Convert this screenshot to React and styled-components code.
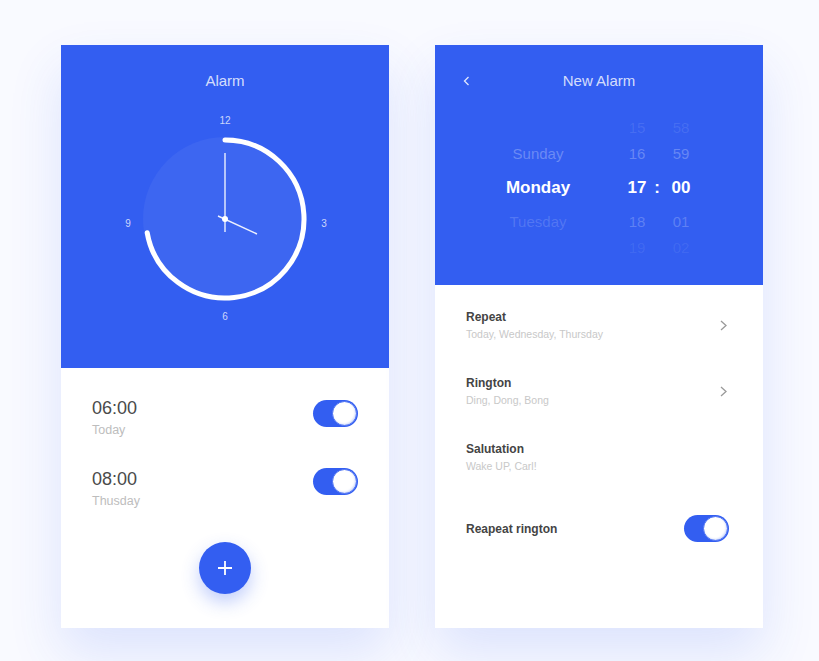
import React from 'react';
import styled, { createGlobalStyle } from 'styled-components';

const BLUE = '#335ef1';

const GlobalStyle = createGlobalStyle`
  html, body {
    margin: 0;
    padding: 0;
    background: #f9faff;
    font-family: "Liberation Sans", Arial, sans-serif;
  }
`;

const Page = styled.div`
  display: flex;
  gap: 46px;
  padding: 45px 0 0 61px;
  height: 661px;
  box-sizing: border-box;
`;

const Card = styled.div`
  width: 328px;
  height: 583px;
  background: #fff;
  display: flex;
  flex-direction: column;
  box-shadow: 0 25px 50px rgba(51, 94, 241, 0.14);
`;

const Header = styled.div`
  height: ${(p) => p.h}px;
  background: ${BLUE};
  display: flex;
  flex-direction: column;
  align-items: center;
  padding-top: 26px;
  box-sizing: border-box;
`;

const TitleBar = styled.div`
  width: 100%;
  height: 20px;
  display: flex;
  align-items: center;
  justify-content: center;
  position: relative;
`;

const Title = styled.div`
  font-size: 15px;
  line-height: 20px;
  color: rgba(255, 255, 255, 0.8);
`;

const Back = styled.svg`
  position: absolute;
  left: 28px;
  top: 5px;
`;

const ClockFace = styled.svg`
  margin-top: 18px;
  display: block;
`;

const Body = styled.div`
  flex: 1;
  display: flex;
  flex-direction: column;
  padding: ${(p) => p.pad};
`;

const AlarmRow = styled.div`
  display: flex;
  justify-content: space-between;
  align-items: flex-start;
  margin-bottom: ${(p) => p.mb || 0}px;
`;

const TimeText = styled.div`
  font-size: 18px;
  line-height: 22px;
  color: #4a4a4a;
`;

const DayText = styled.div`
  font-size: 12.5px;
  line-height: 16px;
  margin-top: 3px;
  color: #bdbdbd;
`;

const Toggle = styled.div`
  width: 45px;
  height: 27px;
  border-radius: 14px;
  background: ${BLUE};
  display: flex;
  justify-content: flex-end;
  align-items: center;
  padding: 0 1px;
  box-sizing: border-box;
  margin-top: ${(p) => p.mt || 0}px;
  flex-shrink: 0;
`;

const Knob = styled.div`
  width: 25px;
  height: 25px;
  border-radius: 50%;
  background: #fff;
  box-sizing: border-box;
  border: 1px solid #4a70f3;
  box-shadow: inset -1px -1px 2px rgba(51, 94, 241, 0.25);
`;

const Fab = styled.div`
  align-self: center;
  width: 52px;
  height: 52px;
  border-radius: 50%;
  background: ${BLUE};
  margin-top: 33px;
  display: flex;
  align-items: center;
  justify-content: center;
  box-shadow: 0 8px 18px rgba(51, 94, 241, 0.3);
`;

const Picker = styled.div`
  display: flex;
  margin-top: 24px;
  align-self: flex-start;
  margin-left: 53px;
`;

const PickCol = styled.div`
  width: ${(p) => p.w}px;
  margin-right: ${(p) => p.mr || 0}px;
  display: flex;
  flex-direction: column;
  align-items: center;
`;

const PickItem = styled.div`
  height: ${(p) => (p.sel ? 42 : 26)}px;
  line-height: ${(p) => (p.sel ? 42 : 26)}px;
  font-size: ${(p) => (p.sel ? 17 : 15)}px;
  font-weight: ${(p) => (p.sel ? 700 : 400)};
  color: rgba(255, 255, 255, ${(p) => p.a});
  white-space: nowrap;
`;

const SettingRow = styled.div`
  display: flex;
  align-items: center;
  justify-content: space-between;
  margin-bottom: ${(p) => p.mb || 0}px;
`;

const SettingTitle = styled.div`
  font-size: 12px;
  line-height: 16px;
  font-weight: 700;
  color: #444;
`;

const SettingSub = styled.div`
  font-size: 10.5px;
  line-height: 14px;
  margin-top: 2px;
  color: #c8c8c8;
`;

const Chevron = styled.svg`
  margin-right: 2px;
  flex-shrink: 0;
`;

const Switch = () => (
  <Knob />
);

function Clock() {
  const r = 79;
  const th = (260 * Math.PI) / 180;
  const ex = 110 + r * Math.sin(th);
  const ey = 110 - r * Math.cos(th);
  const num = { fill: 'rgba(255,255,255,0.75)', fontSize: 10, textAnchor: 'middle', dominantBaseline: 'central', fontFamily: 'Liberation Sans, Arial, sans-serif' };
  return (
    <ClockFace width="220" height="220" viewBox="0 0 220 220">
      <circle cx="110" cy="110" r="82" fill="rgba(255,255,255,0.05)" />
      <path
        d={`M 110 ${110 - r} A ${r} ${r} 0 1 1 ${ex} ${ey}`}
        fill="none"
        stroke="#fff"
        strokeWidth="5"
        strokeLinecap="round"
      />
      <line x1="110" y1="123" x2="110" y2="44" stroke="rgba(255,255,255,0.9)" strokeWidth="1.4" />
      <line x1="103" y1="107" x2="142" y2="125" stroke="rgba(255,255,255,0.9)" strokeWidth="1.4" />
      <circle cx="110" cy="110" r="3" fill="#fff" />
      <text x="110" y="11" {...num}>12</text>
      <text x="209" y="114" {...num}>3</text>
      <text x="110" y="207" {...num}>6</text>
      <text x="13" y="114" {...num}>9</text>
    </ClockFace>
  );
}

const ChevronRight = () => (
  <Chevron width="7" height="11" viewBox="0 0 7 11">
    <polyline points="1,1 6,5.5 1,10" fill="none" stroke="#9a9a9a" strokeWidth="1.3" />
  </Chevron>
);

const days = [
  { t: '', a: 0 },
  { t: 'Sunday', a: 0.28 },
  { t: 'Monday', a: 1, sel: true },
  { t: 'Tuesday', a: 0.16 },
  { t: '', a: 0 },
];
const hours = [
  { t: '15', a: 0.1 },
  { t: '16', a: 0.26 },
  { t: '17', a: 1, sel: true },
  { t: '18', a: 0.22 },
  { t: '19', a: 0.08 },
];
const colon = [
  { t: '', a: 0 },
  { t: '', a: 0 },
  { t: ':', a: 1, sel: true },
  { t: '', a: 0 },
  { t: '', a: 0 },
];
const minutes = [
  { t: '58', a: 0.1 },
  { t: '59', a: 0.26 },
  { t: '00', a: 1, sel: true },
  { t: '01', a: 0.22 },
  { t: '02', a: 0.08 },
];

const renderCol = (items, w, mr) => (
  <PickCol w={w} mr={mr}>
    {items.map((it, i) => (
      <PickItem key={i} sel={it.sel} a={it.a}>{it.t}</PickItem>
    ))}
  </PickCol>
);

export default function App() {
  return (
    <>
      <GlobalStyle />
      <Page>
        <Card>
          <Header h={323}>
            <TitleBar>
              <Title>Alarm</Title>
            </TitleBar>
            <Clock />
          </Header>
          <Body pad="29px 31px 0 31px">
            <AlarmRow mb={30}>
              <div>
                <TimeText>06:00</TimeText>
                <DayText>Today</DayText>
              </div>
              <Toggle mt={3}><Switch /></Toggle>
            </AlarmRow>
            <AlarmRow>
              <div>
                <TimeText>08:00</TimeText>
                <DayText>Thusday</DayText>
              </div>
              <Toggle mt={0}><Switch /></Toggle>
            </AlarmRow>
            <Fab>
              <svg width="16" height="16" viewBox="0 0 16 16">
                <path d="M8 1v14M1 8h14" stroke="#fff" strokeWidth="1.8" />
              </svg>
            </Fab>
          </Body>
        </Card>

        <Card>
          <Header h={240}>
            <TitleBar>
              <Back width="7" height="10" viewBox="0 0 7 10">
                <polyline points="5.5,1 1.5,5 5.5,9" fill="none" stroke="rgba(255,255,255,0.85)" strokeWidth="1.3" />
              </Back>
              <Title>New Alarm</Title>
            </TitleBar>
            <Picker>
              {renderCol(days, 100, 34)}
              {renderCol(hours, 30)}
              {renderCol(colon, 10)}
              {renderCol(minutes, 38)}
            </Picker>
          </Header>
          <Body pad="24px 34px 0 31px">
            <SettingRow mb={34}>
              <div>
                <SettingTitle>Repeat</SettingTitle>
                <SettingSub>Today, Wednesday, Thursday</SettingSub>
              </div>
              <ChevronRight />
            </SettingRow>
            <SettingRow mb={34}>
              <div>
                <SettingTitle>Rington</SettingTitle>
                <SettingSub>Ding, Dong, Bong</SettingSub>
              </div>
              <ChevronRight />
            </SettingRow>
            <SettingRow mb={42}>
              <div>
                <SettingTitle>Salutation</SettingTitle>
                <SettingSub>Wake UP, Carl!</SettingSub>
              </div>
            </SettingRow>
            <SettingRow>
              <SettingTitle>Reapeat rington</SettingTitle>
              <Toggle><Switch /></Toggle>
            </SettingRow>
          </Body>
        </Card>
      </Page>
    </>
  );
}
